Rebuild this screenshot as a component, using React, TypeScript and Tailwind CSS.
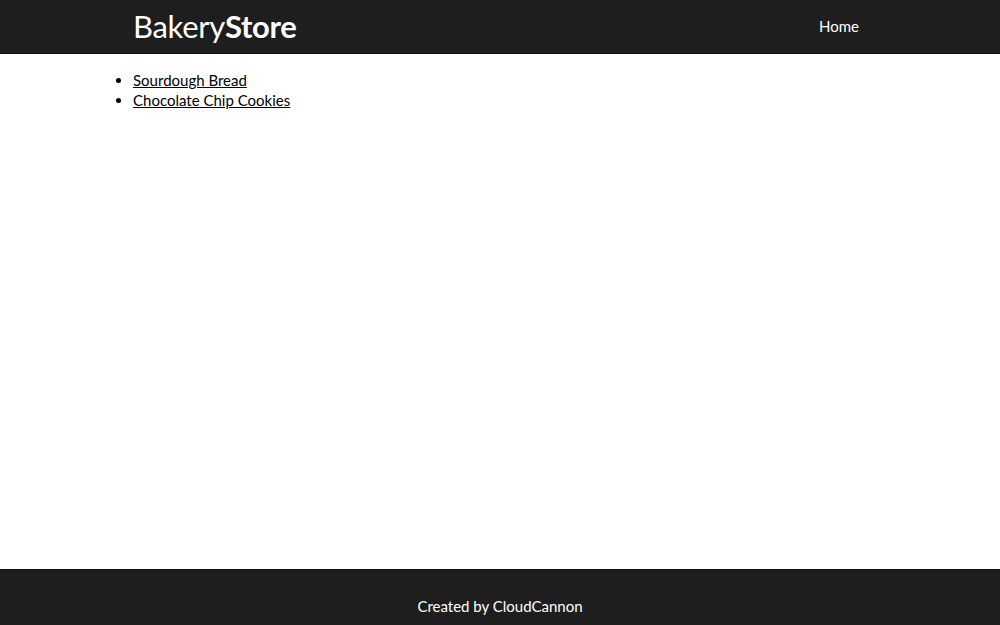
export default function App() {
  return (
    <div className="min-h-[625px] flex flex-col bg-white text-black font-['Lato',sans-serif]">
      <header className="bg-[#1e1e1e] border-b border-[#111] h-[54px]">
        <div className="w-[734px] mx-auto h-full flex items-center justify-between">
          <a className="text-white text-[31px] leading-none tracking-[-0.3px] -mt-[1px]">
            Bakery<strong className="font-bold">Store</strong>
          </a>
          <nav>
            <a className="text-white text-[15px] mr-[8px] -mt-[1px] block">Home</a>
          </nav>
        </div>
      </header>
      <main className="flex-1">
        <ul className="list-disc pl-0 pt-[16px] ml-[133px] text-[15px] leading-[20px]">
          <li>
            <a className="underline">Sourdough Bread</a>
          </li>
          <li>
            <a className="underline">Chocolate Chip Cookies</a>
          </li>
        </ul>
      </main>
      <footer className="bg-[#1e1e1e] border-t border-[#111] h-[56px] flex items-center justify-center pt-[17px]">
        <p className="text-white text-[15px]">Created by CloudCannon</p>
      </footer>
    </div>
  );
}
